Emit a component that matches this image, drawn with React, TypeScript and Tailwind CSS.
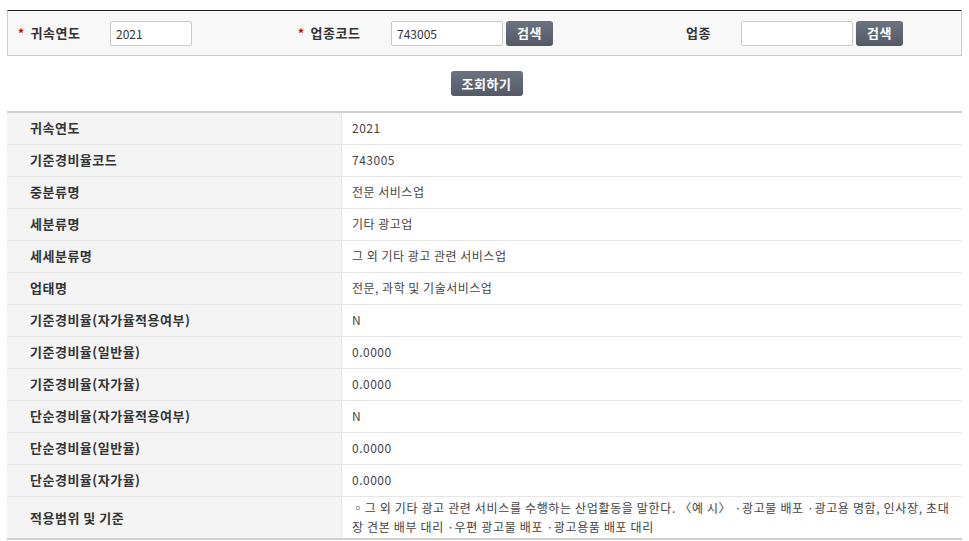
import React from "react";

const rows: { label: string; value: string }[] = [
  { label: "귀속연도", value: "2021" },
  { label: "기준경비율코드", value: "743005" },
  { label: "중분류명", value: "전문 서비스업" },
  { label: "세분류명", value: "기타 광고업" },
  { label: "세세분류명", value: "그 외 기타 광고 관련 서비스업" },
  { label: "업태명", value: "전문, 과학 및 기술서비스업" },
  { label: "기준경비율(자가율적용여부)", value: "N" },
  { label: "기준경비율(일반율)", value: "0.0000" },
  { label: "기준경비율(자가율)", value: "0.0000" },
  { label: "단순경비율(자가율적용여부)", value: "N" },
  { label: "단순경비율(일반율)", value: "0.0000" },
  { label: "단순경비율(자가율)", value: "0.0000" },
];

const font = {
  fontFamily: '"Noto Sans CJK KR", "Noto Sans", sans-serif',
};

const GrayButton = ({ children, className }: { children: React.ReactNode; className?: string }) => (
  <button
    className={
      "h-[25px] rounded-[3px] bg-gradient-to-b from-[#6c7380] to-[#535965] text-[13px] font-bold tracking-[0.5px] text-white " +
      (className || "")
    }
  >
    {children}
  </button>
);

const Star = () => <span className="mr-[6px] text-[12px] font-bold text-[#c00000]">*</span>;

export default function App() {
  return (
    <div className="min-h-[541px] w-[969px] bg-white px-[7px] pt-[10px] text-[#333]" style={font}>
      {/* search box */}
      <div className="flex h-[46px] items-center border border-[#cbcbcb] border-t-[#222] bg-[#f8f8f8] pl-[10px]">
        <div className="flex w-[280px] items-center">
          <div className="flex w-[92px] items-center text-[13px] font-bold tracking-[0.5px]">
            <Star />
            귀속연도
          </div>
          <input
            defaultValue="2021"
            className="h-[25px] w-[82px] rounded-[2px] border border-[#c9c9c9] bg-white px-[5px] text-[12px] outline-none"
          />
        </div>
        <div className="flex w-[388px] items-center">
          <div className="flex w-[93px] items-center text-[13px] font-bold tracking-[0.5px]">
            <Star />
            업종코드
          </div>
          <input
            defaultValue="743005"
            className="h-[25px] w-[112px] rounded-[2px] border border-[#c9c9c9] bg-white px-[5px] text-[12px] outline-none"
          />
          <GrayButton className="ml-[3px] w-[47px]">검색</GrayButton>
        </div>
        <div className="flex items-center">
          <div className="w-[55px] text-[13px] font-bold tracking-[0.5px]">업종</div>
          <input className="h-[25px] w-[112px] rounded-[2px] border border-[#c9c9c9] bg-white px-[5px] text-[12px] outline-none" />
          <GrayButton className="ml-[3px] w-[47px]">검색</GrayButton>
        </div>
      </div>

      <div className="flex justify-center pt-[15px] pb-[15px] pl-[4px]">
        <GrayButton className="w-[72px]">조회하기</GrayButton>
      </div>

      {/* result table */}
      <div className="border-t-2 border-b-2 border-[#d0d0d0]">
        {rows.map((r, i) => (
          <div
            key={i}
            className={"grid grid-cols-[335px_1fr] " + (i > 0 ? "h-[32px] border-t border-[#e6e6e6]" : "h-[31px]")}
          >
            <div className="flex items-center border-r border-[#e6e6e6] bg-[#f4f4f4] pb-[2px] pl-[23px] text-[13px] font-bold tracking-[0.5px]">
              {r.label}
            </div>
            <div className="flex items-center pb-[2px] pl-[10px] text-[12px] tracking-[0.5px] text-[#444]">{r.value}</div>
          </div>
        ))}
        <div className="grid min-h-[42px] grid-cols-[335px_1fr] border-t border-[#e6e6e6]">
          <div className="flex items-center border-r border-[#e6e6e6] bg-[#f4f4f4] pl-[23px] text-[13px] font-bold tracking-[0.5px]">
            적용범위 및 기준
          </div>
          <div className="py-[1px] pl-[10px] pr-[10px] text-[12px] leading-[19px] tracking-[0.65px] text-[#444] [word-break:break-all]">
            ◦그 외 기타 광고 관련 서비스를 수행하는 산업활동을 말한다. 〈예 시〉 ·광고물 배포 ·광고용 명함, 인사장, 초대장 견본 배부 대리 ·우편 광고물 배포 ·광고용품 배포 대리
          </div>
        </div>
      </div>
    </div>
  );
}
